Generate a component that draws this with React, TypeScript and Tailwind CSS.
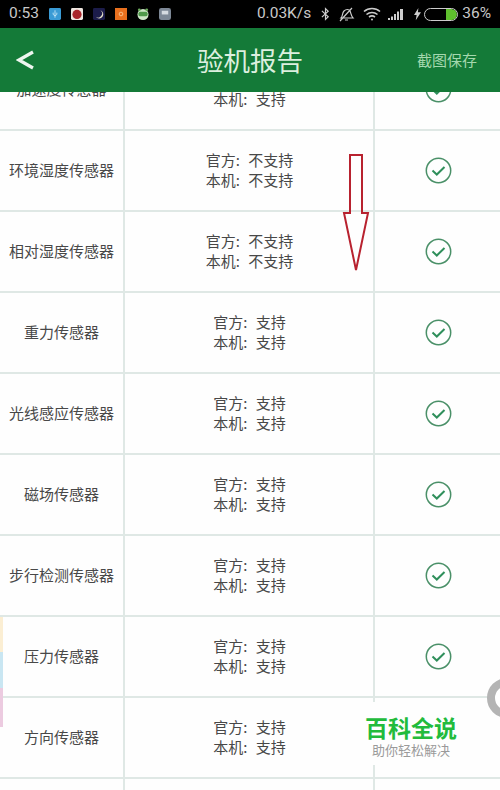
const rows: [string, string][] = [
  ["加速度传感器", "支持"],
  ["环境湿度传感器", "不支持"],
  ["相对湿度传感器", "不支持"],
  ["重力传感器", "支持"],
  ["光线感应传感器", "支持"],
  ["磁场传感器", "支持"],
  ["步行检测传感器", "支持"],
  ["压力传感器", "支持"],
  ["方向传感器", "支持"],
];

function Check() {
  return (
    <svg width="27" height="27" viewBox="0 0 27 27" fill="none">
      <circle cx="13.5" cy="13.5" r="12.2" stroke="#4a9068" strokeWidth="1.5" />
      <path d="M7.5 13.5 L11.8 17.5 L19.5 10" stroke="#2f8f5b" strokeWidth="2" />
    </svg>
  );
}

function StatusIcons() {
  return (
    <div className="flex items-center gap-[10px] ml-[10px]">
      <svg width="12" height="12" viewBox="0 0 13 13"><rect width="13" height="13" rx="1.5" fill="#3a9bd5" /><path d="M6.5 2.5v8M4.5 5v2l2 1.5 2-1.5V5" stroke="#bfe3f5" fill="none" /></svg>
      <svg width="12" height="12" viewBox="0 0 13 13"><rect width="13" height="13" rx="1.5" fill="#efe6e0" /><circle cx="6.5" cy="7" r="5" fill="#a9252a" /></svg>
      <svg width="12" height="12" viewBox="0 0 13 13"><rect width="13" height="13" rx="1.5" fill="#1c1c4a" /><path d="M8 2.5A4.5 4.5 0 1 1 3 9.5 4 4 0 0 0 8 2.5Z" fill="#e8e4c8" /></svg>
      <svg width="12" height="12" viewBox="0 0 13 13"><rect width="13" height="13" fill="#e8701e" /><circle cx="6.5" cy="6.5" r="2" fill="none" stroke="#f7c48f" /></svg>
      <svg width="12" height="12" viewBox="0 0 13 13"><ellipse cx="6.5" cy="7" rx="6" ry="6" fill="#cfe8c8" /><rect x="1.5" y="4" width="10" height="5" rx="2" fill="#4f9a4a" /><circle cx="2.5" cy="2" r="1.5" fill="#6fae5e" /><circle cx="10.5" cy="2" r="1.5" fill="#6fae5e" /></svg>
      <svg width="12" height="12" viewBox="0 0 13 13"><rect width="13" height="13" rx="2.5" fill="#7d8896" /><rect x="3" y="3" width="7" height="4" fill="#d5dae0" /></svg>
    </div>
  );
}

export default function App() {
  return (
    <div className="relative w-[500px] h-[790px] overflow-hidden bg-[#fefefe] font-['Noto_Sans_CJK_SC',sans-serif]">
      <div className="relative z-10 h-[28px] bg-black flex items-center justify-between pl-[9px] pr-[9px] text-[#c8c8c8] text-[15.5px] font-['Roboto',sans-serif]">
        <div className="flex items-center">
          <span>0:53</span>
          <StatusIcons />
        </div>
        <div className="flex items-center">
          <span>0.03K/s</span>
          <svg className="ml-[10px]" width="9" height="14" viewBox="0 0 10 14" fill="none" stroke="#ccc" strokeWidth="1.3"><path d="M1 3.5 8 10 5 13V1L8 4 1 10.5" /></svg>
          <svg className="ml-[8px]" width="17" height="15" viewBox="0 0 17 15" fill="none" stroke="#ccc" strokeWidth="1.2"><path d="M3 11c2-2 1-5 3-7s5-2 6 0 1 5 3 7ZM7 13h3M2 14 14 1" /></svg>
          <svg className="ml-[8px]" width="18" height="14" viewBox="0 0 18 14" fill="none" stroke="#ccc" strokeWidth="1.6"><path d="M1 4.5C5.5.5 12.5.5 17 4.5M3.5 7.5c3.2-2.7 7.8-2.7 11 0M6 10c1.8-1.3 4.2-1.3 6 0" /><circle cx="9" cy="12.500" r="1" fill="#ccc" stroke="none" /></svg>
          <svg className="ml-[7px]" width="17" height="13" viewBox="0 0 17 13" fill="#ccc"><rect x="0" y="10" width="2" height="2" /><rect x="3" y="8.5" width="2" height="3.5" /><rect x="6" y="6" width="2" height="6" /><rect x="9" y="3.5" width="2" height="8.5" /><rect x="12" y="1" width="3" height="11" /></svg>
          <svg className="ml-[9px]" width="7" height="14" viewBox="0 0 8 14" fill="#ccc"><path d="M5 0 0 8h3l-1 6 6-9H4.5Z" /></svg>
          <div className="ml-[3px] w-[34px] h-[13px] rounded-full border border-[#ccc] flex justify-end items-center overflow-hidden">
            <div className="w-[11px] h-[11px] bg-[#5fc02e] rounded-r-full" />
          </div>
          <span className="ml-[4px]">36%</span>
        </div>
      </div>

      <header className="relative z-10 h-[64px] bg-[#147a38] flex items-center justify-between">
        <svg className="ml-[16px]" width="19" height="22" viewBox="0 0 19 22" fill="none"><path d="M17 3 3 11l14 8" stroke="#eef6ef" strokeWidth="3.2" /></svg>
        <h1 className="absolute left-0 right-0 text-center text-[26.5px] leading-[36px] text-[#dcefdf] font-normal">验机报告</h1>
        <span className="mr-[23px] text-[15px] text-[#a4d8ae]">截图保存</span>
      </header>

      <div className="-mt-[42px]">
        {rows.map(([name, value]) => (
          <div key={name} className="flex h-[81px] border-b-2 border-[#dfe8e5] text-[#484848]">
            <div className="w-[125px] border-r-2 border-[#dfe8e5] flex items-center justify-center text-[15px]">{name}</div>
            <div className="w-[250px] border-r-2 border-[#dfe8e5] flex flex-col items-center justify-center pl-[1px] pb-[2px] text-[15px] leading-[20px] [word-spacing:5px]">
              <span>官方: {value}</span>
              <span>本机: {value}</span>
            </div>
            <div className="flex-1 flex items-center justify-center pl-[1px]">
              <Check />
            </div>
          </div>
        ))}
        <div className="flex h-[81px]">
          <div className="w-[125px] border-r-2 border-[#dfe8e5]" />
          <div className="w-[250px] border-r-2 border-[#dfe8e5]" />
        </div>
      </div>

      <svg className="absolute left-[342px] top-[153px]" width="28" height="120" viewBox="0 0 28 120" fill="none">
        <path d="M8 2H20V60H26L14 117 2 60H8Z" stroke="#b8222f" strokeWidth="2" />
      </svg>

      <div className="absolute left-0 top-[617px] w-[3px] h-[110px] flex flex-col">
        <div className="h-[35px] bg-[#fbeed3]" />
        <div className="h-[36px] bg-[#c9e6f2]" />
        <div className="h-[39px] bg-[#eccbe0]" />
      </div>

      <div className="absolute left-[487px] top-[678px] w-[40px] h-[40px] rounded-full border-[8px] border-[#b4b4b4] bg-white" />

      <div className="absolute left-[346px] top-[702px] w-[130px] h-[63px] bg-[#fefefe] flex flex-col items-center">
        <span className="mt-[11px] text-[23px] leading-[28px] font-bold text-[#22bb3c]">百科全说</span>
        <span className="text-[13px] leading-[18px] text-[#9a9a9a]">助你轻松解决</span>
      </div>
    </div>
  );
}
